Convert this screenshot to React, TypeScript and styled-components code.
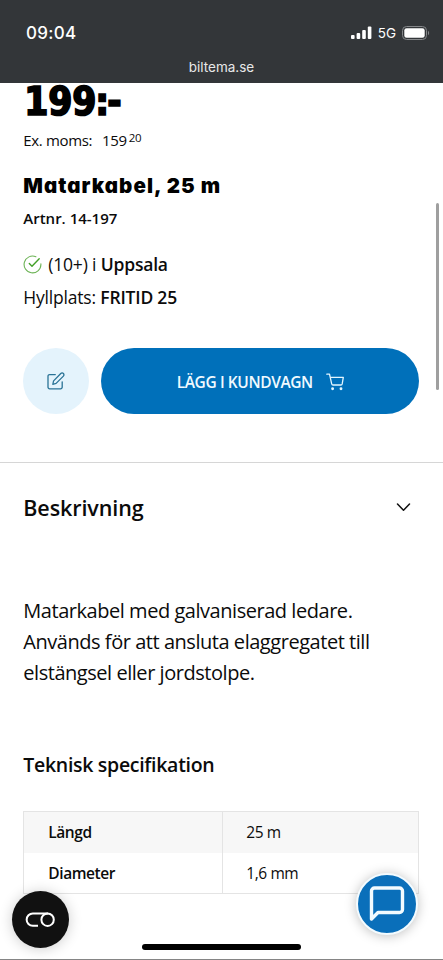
import React from 'react';
import styled, { createGlobalStyle } from 'styled-components';

const Global = createGlobalStyle`
  *, *::before, *::after { box-sizing: border-box; }
  body { margin: 0; background: #fff; }
  h1, h2, h3, p, dl, dt, dd { margin: 0; }
  button { border: 0; padding: 0; font: inherit; }
`;

const Phone = styled.div`
  position: relative;
  display: flex;
  flex-direction: column;
  width: 443px;
  height: 960px;
  overflow: hidden;
  background: #fff;
  border-bottom: 1px solid #858585;
  color: #0b0b0b;
  font-family: 'Open Sans', 'Noto Sans', sans-serif;
`;

const Header = styled.header`
  flex: none;
  height: 83px;
  background: #333639;
  color: #fff;
  font-family: Inter, sans-serif;
`;

const StatusBar = styled.div`
  display: flex;
  align-items: center;
  justify-content: space-between;
  height: 56px;
  padding: 9px 13px 0 26px;
`;

const Clock = styled.span`
  font-size: 17px;
  font-weight: 500;
  letter-spacing: 0.3px;
`;

const StatusIcons = styled.div`
  display: flex;
  align-items: center;
  gap: 6px;
  font-size: 13.5px;
`;

const Address = styled.div`
  margin-top: 2px;
  font-size: 13.5px;
  line-height: 18px;
  text-align: center;
  color: #e8e8e8;
`;

const Product = styled.section`
  display: flex;
  flex-direction: column;
  flex: none;
  height: 380px;
  padding: 0 23.7px 0 23.3px;
  border-bottom: 1px solid #d6d6d6;
`;

const Price = styled.div`
  display: flex;
  height: 37px;
  padding-left: 1px;
  font: bold 38.5px/37px 'DejaVu Sans Condensed', 'DejaVu Sans', sans-serif;
  font-stretch: 90%;
  letter-spacing: -0.1px;
  color: #000;
  -webkit-text-stroke: 1.7px #000;
`;

const PriceTail = styled.span`
  margin-left: -1px;
  letter-spacing: -2px;
`;

const ExVat = styled.p`
  display: flex;
  margin-top: 9px;
  font-size: 15px;
  line-height: 22px;
  letter-spacing: -0.35px;
`;

const Amount = styled.span`
  margin-left: 10px;
`;

const Decimals = styled.span`
  margin: -2px 0 0 2px;
  font-size: 11.5px;
`;

const Title = styled.h1`
  margin-top: 21px;
  font: 900 20.5px/28px Inter, sans-serif;
  font-feature-settings: 'cv11';
  letter-spacing: 1.05px;
  color: #000;
`;

const Article = styled.p`
  margin-top: 7px;
  font-size: 15px;
  font-weight: 600;
  line-height: 22px;
`;

const StockLine = styled.p<{ $top: number }>`
  display: flex;
  align-items: center;
  gap: 4.5px;
  margin-top: ${({ $top }) => $top}px;
  font-size: 17.5px;
  line-height: 24px;
  letter-spacing: -0.2px;
`;

const Strong = styled.span`
  font-weight: 600;
`;

const StockIcon = styled.svg`
  margin-right: 1.5px;
`;

const Actions = styled.div`
  display: flex;
  gap: 12px;
  margin-top: 39px;
`;

const EditButton = styled.button`
  display: flex;
  align-items: center;
  justify-content: center;
  width: 66px;
  height: 66px;
  border-radius: 50%;
  background: #e4f3fc;
`;

const CartButton = styled.button`
  display: flex;
  flex: 1;
  align-items: center;
  justify-content: center;
  gap: 13px;
  height: 66px;
  padding-top: 1px;
  border-radius: 33px;
  background: #0070ba;
  color: #f0faff;
  font-size: 15.5px;
  font-weight: 600;
  letter-spacing: -0.4px;
`;

const Details = styled.main`
  display: flex;
  flex-direction: column;
  padding: 0 23.7px 0 23.3px;
`;

const AccordionHead = styled.div`
  display: flex;
  align-items: center;
  justify-content: space-between;
  height: 30px;
  margin-top: 30px;
  padding-right: 7px;
`;

const Heading = styled.h2`
  font-size: 21.5px;
  font-weight: 600;
  letter-spacing: -0.1px;
  line-height: 30px;
`;

const Description = styled.p`
  margin-top: 72px;
  font-size: 20px;
  line-height: 31px;
  letter-spacing: -0.46px;
  white-space: nowrap;
`;

const SubHeading = styled.h3`
  margin-top: 63px;
  font-size: 19.5px;
  font-weight: 600;
  letter-spacing: -0.3px;
  line-height: 28px;
`;

const Specs = styled.dl`
  margin-top: 32px;
  border: 1px solid #e4e4e4;
`;

const SpecRow = styled.div<{ $shaded?: boolean }>`
  display: grid;
  grid-template-columns: 198px 1fr;
  height: 40.5px;
  background: ${({ $shaded }) => ($shaded ? '#f7f7f7' : '#fff')};
  font-size: 15.5px;
  line-height: 41px;
  letter-spacing: -0.42px;
`;

const SpecName = styled.dt`
  padding-left: 24px;
  font-weight: 600;
`;

const SpecValue = styled.dd`
  padding-left: 23px;
  border-left: 1px solid #e4e4e4;
`;

const ScrollThumb = styled.div`
  position: absolute;
  top: 203px;
  right: 4px;
  width: 3px;
  height: 187px;
  border-radius: 2px;
  background: #9f9f9f;
`;

const ConsentButton = styled.button`
  position: absolute;
  left: 12px;
  top: 891px;
  width: 57px;
  height: 57px;
  border-radius: 50%;
  background: #111;
  box-shadow: 0 1px 14px rgba(0, 0, 0, 0.2);
`;

const ChatButton = styled.button`
  position: absolute;
  left: 356px;
  top: 873px;
  display: flex;
  align-items: center;
  justify-content: center;
  width: 62px;
  height: 62px;
  border: 2px solid #f3fbff;
  border-radius: 50%;
  background: #0a6fba;
  box-shadow: 0 1px 12px rgba(0, 0, 0, 0.25);
`;

const HomeIndicator = styled.div`
  position: absolute;
  left: 142px;
  top: 944px;
  width: 159px;
  height: 6px;
  border-radius: 3px;
  background: #000;
`;

const SignalIcon = () => (
  <svg width="21" height="14" viewBox="0 0 21 14" fill="#fff">
    <rect x="0" y="9" width="3.6" height="4" rx="1" />
    <rect x="5.6" y="7" width="3.6" height="6" rx="1" />
    <rect x="11.2" y="4" width="3.6" height="9" rx="1" />
    <rect x="16.8" y="0.5" width="3.6" height="12.5" rx="1" />
  </svg>
);

const BatteryIcon = () => (
  <svg width="28" height="14" viewBox="0 0 28 14">
    <rect x="0.5" y="0.5" width="24" height="13" rx="4" fill="none" stroke="#85878a" />
    <rect x="2.3" y="2.3" width="20.4" height="9.4" rx="2.3" fill="#fff" />
    <path d="M26 4.8c1.5.7 1.5 3.7 0 4.4z" fill="#85878a" />
  </svg>
);

const CheckIcon = () => (
  <StockIcon width="19" height="19" viewBox="0 0 19 19" fill="none" strokeLinecap="round" strokeLinejoin="round">
    <path d="M17.9 8.7v.8a8.4 8.4 0 1 1-5-7.7" stroke="#6db356" strokeWidth="1.1" />
    <path d="M6.3 8.6 9 11.3l7.2-7.5" stroke="#43a028" strokeWidth="1.4" />
  </StockIcon>
);

const EditIcon = () => (
  <svg width="18" height="18" viewBox="0 0 18 18" fill="none" stroke="#2a7396" strokeWidth="1.3" strokeLinecap="round" strokeLinejoin="round">
    <path d="M8.3 2.6H2.6A1.6 1.6 0 0 0 1 4.2v11A1.6 1.6 0 0 0 2.6 16.8h11a1.6 1.6 0 0 0 1.6-1.6V9.8" />
    <path d="m13.8 1.5a1.8 1.8 0 0 1 2.6 2.6L9.1 11.4l-3.3.9.8-3.4z" />
  </svg>
);

const CartIcon = () => (
  <svg width="18" height="18" viewBox="0 0 18 18" fill="none" stroke="#e3f6ff" strokeWidth="1.3" strokeLinecap="round" strokeLinejoin="round">
    <path d="M.8 1.2h2.7l2.2 9.7a1.4 1.4 0 0 0 1.4 1.1h7.8a1.4 1.4 0 0 0 1.3-1.1l1.1-6.5H4.3" />
    <circle cx="6.6" cy="15.8" r=".8" fill="#e3f6ff" />
    <circle cx="15" cy="15.8" r=".8" fill="#e3f6ff" />
  </svg>
);

const ChevronIcon = () => (
  <svg width="17" height="10" viewBox="0 0 17 10" fill="none" stroke="#111" strokeWidth="1.5" strokeLinecap="round" strokeLinejoin="round">
    <path d="m2.5 1 6 6.3 6-6.3" />
  </svg>
);

const ConsentIcon = () => (
  <svg width="57" height="57" viewBox="0 0 57 57" fill="none" stroke="#fff" strokeWidth="2">
    <path d="M26 34.8h-5.2a6 6 0 0 1 0-12.3H36" />
    <circle cx="35.6" cy="28.7" r="6.2" />
  </svg>
);

const ChatIcon = () => (
  <svg width="36" height="36" viewBox="0 0 36 36" fill="none" stroke="#f2fbff" strokeWidth="3.4" strokeLinejoin="round">
    <path d="M2.5 33V5a3 3 0 0 1 3-3h25a3 3 0 0 1 3 3v18.5a3 3 0 0 1-3 3H9z" />
  </svg>
);

const specs = [
  { name: 'Längd', value: '25 m' },
  { name: 'Diameter', value: '1,6 mm' },
];

export default function App() {
  return (
    <Phone>
      <Global />
      <Header>
        <StatusBar>
          <Clock>09:04</Clock>
          <StatusIcons>
            <SignalIcon />
            <span>5G</span>
            <BatteryIcon />
          </StatusIcons>
        </StatusBar>
        <Address>biltema.se</Address>
      </Header>
      <Product>
        <Price>
          199<PriceTail>:-</PriceTail>
        </Price>
        <ExVat>
          Ex. moms:<Amount>159</Amount>
          <Decimals>20</Decimals>
        </ExVat>
        <Title>Matarkabel, 25 m</Title>
        <Article>Artnr. 14-197</Article>
        <StockLine $top={23}>
          <CheckIcon />
          <span>(10+) i</span>
          <Strong>Uppsala</Strong>
        </StockLine>
        <StockLine $top={9}>
          <span>Hyllplats:</span>
          <Strong>FRITID 25</Strong>
        </StockLine>
        <Actions>
          <EditButton aria-label="Redigera">
            <EditIcon />
          </EditButton>
          <CartButton>
            LÄGG I KUNDVAGN
            <CartIcon />
          </CartButton>
        </Actions>
      </Product>
      <Details>
        <AccordionHead>
          <Heading>Beskrivning</Heading>
          <ChevronIcon />
        </AccordionHead>
        <Description>
          Matarkabel med galvaniserad ledare.
          <br />
          Används för att ansluta elaggregatet till
          <br />
          elstängsel eller jordstolpe.
        </Description>
        <SubHeading>Teknisk specifikation</SubHeading>
        <Specs>
          {specs.map((spec, i) => (
            <SpecRow key={spec.name} $shaded={i % 2 === 0}>
              <SpecName>{spec.name}</SpecName>
              <SpecValue>{spec.value}</SpecValue>
            </SpecRow>
          ))}
        </Specs>
      </Details>
      <ScrollThumb />
      <ConsentButton aria-label="Cookies">
        <ConsentIcon />
      </ConsentButton>
      <ChatButton aria-label="Chatt">
        <ChatIcon />
      </ChatButton>
      <HomeIndicator />
    </Phone>
  );
}
